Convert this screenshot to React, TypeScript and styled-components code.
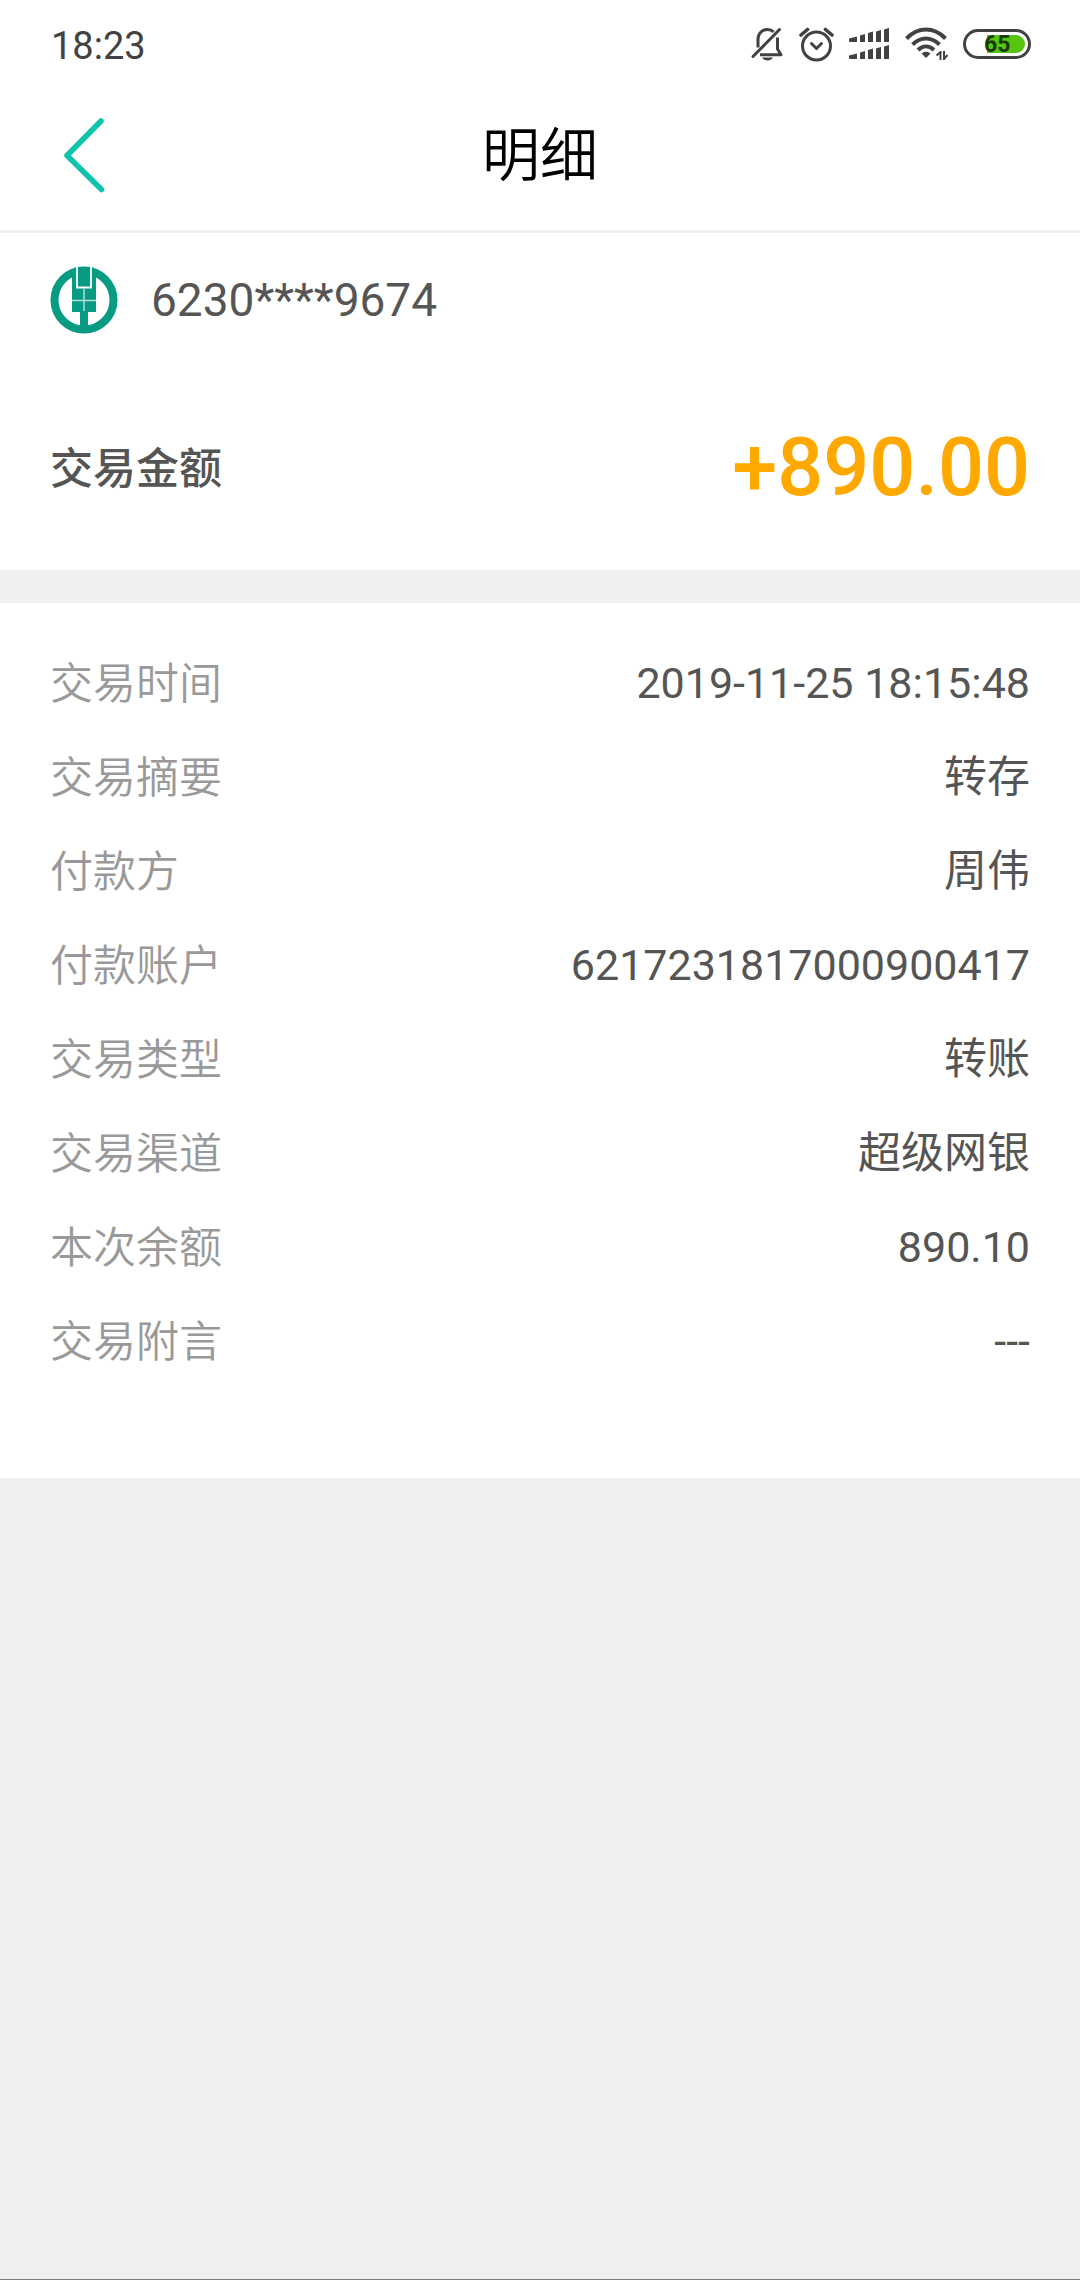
import React from "react";
import styled, { createGlobalStyle } from "styled-components";

const GlobalStyle = createGlobalStyle`
  * {
    box-sizing: border-box;
  }
  body {
    margin: 0;
    background: #efefef;
    color: #555555;
    font-family: Roboto, "Noto Sans CJK SC", sans-serif;
    font-size: 43px;
    line-height: 60px;
  }
`;

const Screen = styled.div`
  min-height: 100vh;
  background: #efefef;
  border-bottom: 1px solid #7d7d7d;
`;

const StatusBar = styled.div`
  display: flex;
  align-items: center;
  justify-content: space-between;
  height: 80px;
  padding: 8px 49px 0 51px;
  background: #ffffff;
  color: #424242;
`;

const Clock = styled.time`
  padding-top: 4px;
  font-size: 38px;
`;

const StatusIcons = styled.div`
  display: flex;
  align-items: center;
  gap: 15px;

  svg {
    display: block;
  }
`;

const Battery = styled.div`
  display: flex;
  justify-content: flex-end;
  width: 68px;
  height: 30px;
  padding: 3px;
  border: 3px solid #424242;
  border-radius: 15px;
`;

const BatteryLevel = styled.span`
  width: 38px;
  height: 18px;
  border-radius: 0 9px 9px 0;
  background: #55c510;
  color: #173a0a;
  font-size: 23px;
  font-weight: 700;
  line-height: 20px;
  text-indent: -3px;
`;

const Header = styled.header`
  display: grid;
  grid-template-columns: 1fr auto 1fr;
  align-items: center;
  height: 153px;
  padding: 0 51px;
  background: #ffffff;
  border-bottom: 3px solid #efefef;
`;

const BackButton = styled.button`
  justify-self: start;
  padding: 0 12px;
  border: 0;
  background: none;
  cursor: pointer;

  svg {
    display: block;
  }
`;

const Title = styled.h1`
  margin: 0;
  padding-top: 2px;
  color: #000000;
  font-size: 58px;
  font-weight: 350;
  line-height: 80px;
`;

const Summary = styled.section`
  padding: 0 50px;
  background: #ffffff;
`;

const Account = styled.div`
  display: flex;
  align-items: center;
  gap: 33px;
  height: 133px;
  font-size: 46px;
`;

const Amount = styled.div`
  display: flex;
  align-items: center;
  justify-content: space-between;
  height: 204px;
`;

const AmountLabel = styled.span`
  padding-top: 2px;
  font-weight: 500;
`;

const AmountValue = styled.strong`
  color: #ffa800;
  font-size: 81px;
  font-weight: 500;
  line-height: 100px;
`;

const Details = styled.dl`
  margin: 33px 0 0;
  padding: 33px 50px 90px;
  background: #ffffff;
`;

const DetailRow = styled.div`
  display: flex;
  align-items: center;
  justify-content: space-between;
  height: 94px;
`;

const DetailLabel = styled.dt`
  padding-top: 2px;
  color: #999999;
  font-weight: 350;
`;

const DetailValue = styled.dd`
  margin: 0;
`;

const details = [
  { label: "交易时间", value: "2019-11-25 18:15:48" },
  { label: "交易摘要", value: "转存" },
  { label: "付款方", value: "周伟" },
  { label: "付款账户", value: "6217231817000900417" },
  { label: "交易类型", value: "转账" },
  { label: "交易渠道", value: "超级网银" },
  { label: "本次余额", value: "890.10" },
  { label: "交易附言", value: "---" },
];

const MutedBellIcon = () => (
  <svg width="33" height="34" viewBox="0 0 33 34" fill="none" stroke="#424242" strokeWidth="3" aria-hidden="true">
    <path d="M7 20.500V12.500C7 6.500 11 2.600 16.500 2.600c2.600 0 4.600.8 6.200 2.200" />
    <path d="M26.500 10.500v11.500l3.500 5.700H9" strokeLinejoin="round" />
    <path d="M2 29.500 28.500 2.500" strokeLinecap="round" />
    <path d="M11 30.500h11c-1 2-3 3-5.500 3s-4.500-1-5.500-3z" fill="#424242" stroke="none" />
  </svg>
);

const AlarmIcon = () => (
  <svg width="35" height="35" viewBox="0 0 35 35" fill="none" stroke="#424242" strokeWidth="3" strokeLinecap="round" strokeLinejoin="round" aria-hidden="true">
    <circle cx="17.500" cy="19" r="14" />
    <path d="m12.500 16.500 5 5 5-5" />
    <path d="M2 8 8.500 2.500M33 8l-6.500-5.500" strokeWidth="3.600" />
  </svg>
);

const SignalIcon = () => (
  <svg width="41" height="32" viewBox="0 0 41 32" fill="#424242" aria-hidden="true">
    <path d="M0 10.500 8 8.500V14H1Q0 14 0 13zM11 7.500l5-1.500v8h-5zM19 5l5-1.500V14h-5zM27 3.500 32 2v12h-5zM35 1.500 40 0v14h-5z" />
    <path d="M0 27.500l8-2V31H1q-1 0-1-1zM11 24.500l5-1.500v8h-5zM19 22l5-1.500V31h-5zM27 20.500 32 19v12h-5zM35 18.500 40 17v14h-5z" />
  </svg>
);

const WifiIcon = () => (
  <svg width="43" height="34" viewBox="0 0 43 34" fill="none" stroke="#424242" strokeWidth="4" aria-hidden="true">
    <path d="M1.500 11.500C13-.5 29-.5 40.500 11.500" />
    <path d="M7.500 17.500c8.500-8 18.500-8 27 0" />
    <path d="M13 23c5-4.800 11-4.800 16 0" />
    <path d="M16.500 26.500c3-2.500 6-2.500 9 0L21 31z" fill="#424242" stroke="none" />
    <path d="M35.500 24v9M31.500 28.500l4-3.500M39 24v9M39 32l3.500-4" strokeWidth="2" />
  </svg>
);

const ChevronIcon = () => (
  <svg width="42" height="76" viewBox="0 0 42 76" fill="none" stroke="#0fc4ac" strokeWidth="5.500" strokeLinecap="round" strokeLinejoin="round" aria-hidden="true">
    <path d="M38 4 4 38.500l34.500 34" />
  </svg>
);

const BankLogo = () => (
  <svg width="68" height="68" viewBox="0 0 68 68" role="img" aria-label="中国农业银行">
    <circle cx="34" cy="34" r="29.500" fill="#ffffff" stroke="#079b84" strokeWidth="8" />
    <path d="M22 8 25.500 1h17L46 8v38H22zM30 45h8v20h-8z" fill="#079b84" />
    <path d="M27 0v21.500h14V0" fill="none" stroke="#ffffff" strokeWidth="1.800" />
    <path d="M34 23v22M22 34.500h24" stroke="#b5dfd8" strokeWidth="1.500" />
  </svg>
);

export default function App() {
  return (
    <Screen>
      <GlobalStyle />
      <StatusBar>
        <Clock dateTime="18:23">18:23</Clock>
        <StatusIcons>
          <MutedBellIcon />
          <AlarmIcon />
          <SignalIcon />
          <WifiIcon />
          <Battery>
            <BatteryLevel>65</BatteryLevel>
          </Battery>
        </StatusIcons>
      </StatusBar>
      <Header>
        <BackButton type="button" aria-label="返回">
          <ChevronIcon />
        </BackButton>
        <Title>明细</Title>
      </Header>
      <main>
        <Summary>
          <Account>
            <BankLogo />
            <span>6230****9674</span>
          </Account>
          <Amount>
            <AmountLabel>交易金额</AmountLabel>
            <AmountValue>+890.00</AmountValue>
          </Amount>
        </Summary>
        <Details>
          {details.map(({ label, value }) => (
            <DetailRow key={label}>
              <DetailLabel>{label}</DetailLabel>
              <DetailValue>{value}</DetailValue>
            </DetailRow>
          ))}
        </Details>
      </main>
    </Screen>
  );
}
